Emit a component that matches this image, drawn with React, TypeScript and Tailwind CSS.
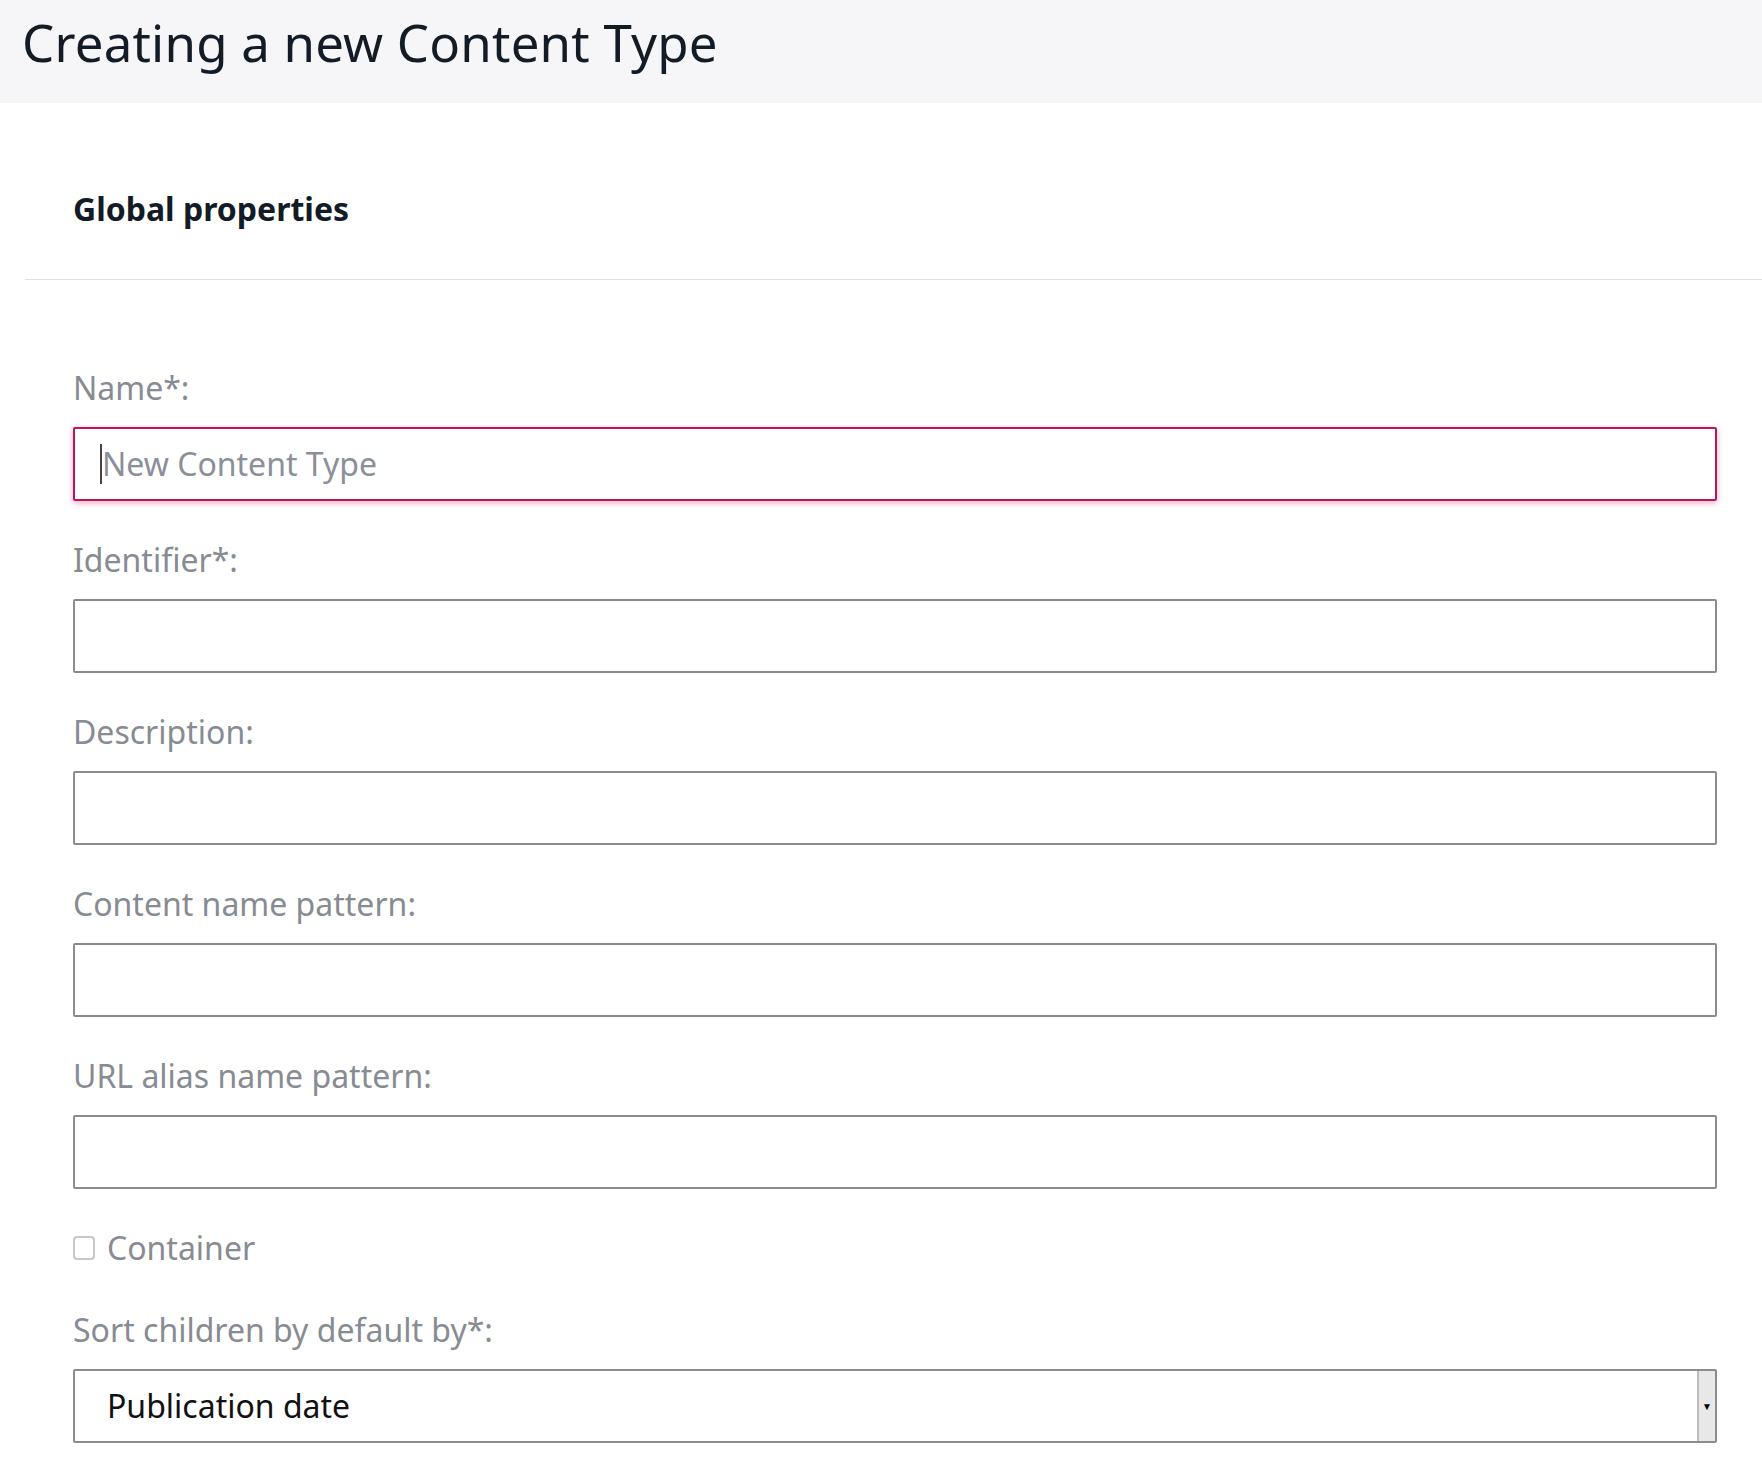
export default function App() {
  const fields = ["Identifier*:", "Description:", "Content name pattern:", "URL alias name pattern:"];
  return (
    <div className="min-h-[1478px] bg-white" style={{ fontFamily: '"Noto Sans", sans-serif' }}>
      <div className="h-[103px] bg-[#f6f6f8] flex items-center pl-[22px] pb-[18px]">
        <h1 className="text-[51px] text-[#131c26] leading-none tracking-[0.2px]">Creating a new Content Type</h1>
      </div>
      <div className="pl-[25px]">
        <div className="h-[177px] border-b border-[#e0e0e6] flex items-center pl-[48px] pt-[35px]">
          <h2 className="text-[32px] font-bold text-[#131c26]">Global properties</h2>
        </div>
      </div>
      <div className="pl-[73px] pr-[45px] pt-[87px] flex flex-col">
        <label className="text-[32px] text-[#878b92] leading-[42px]">Name*:</label>
        <div className="mt-[18px] h-[74px] border-2 border-[#c0135e] rounded-[2px] shadow-[0_2px_6px_rgba(192,19,94,0.35)] flex items-center pl-[25px]">
          <span className="w-[2px] h-[40px] bg-[#444]" />
          <span className="text-[32px] text-[#8a8f98]">New Content Type</span>
        </div>
        {fields.map((f) => (
          <div key={f} className="flex flex-col mt-[38px]">
            <label className="text-[32px] text-[#878b92] leading-[42px]">{f}</label>
            <div className="mt-[18px] h-[74px] border-2 border-[#8c8c8c] rounded-[2px]" />
          </div>
        ))}
        <div className="mt-[38px] flex items-center gap-[12px] h-[42px]">
          <span className="w-[22px] h-[24px] border-2 border-[#c8c8c8] rounded-[4px]" />
          <span className="text-[32px] text-[#878b92]">Container</span>
        </div>
        <label className="mt-[40px] text-[32px] text-[#878b92] leading-[42px]">Sort children by default by*:</label>
        <div className="mt-[18px] h-[74px] border-2 border-[#8c8c8c] rounded-[2px] flex items-center pl-[32px] relative">
          <span className="text-[32px] text-[#111]">Publication date</span>
          <div className="absolute right-0 top-0 bottom-0 w-[18px] bg-[#e8e8e8] border-l-2 border-[#bdbdbd] flex items-center justify-center">
            <span className="text-[10px] text-black">▼</span>
          </div>
        </div>
      </div>
    </div>
  );
}
